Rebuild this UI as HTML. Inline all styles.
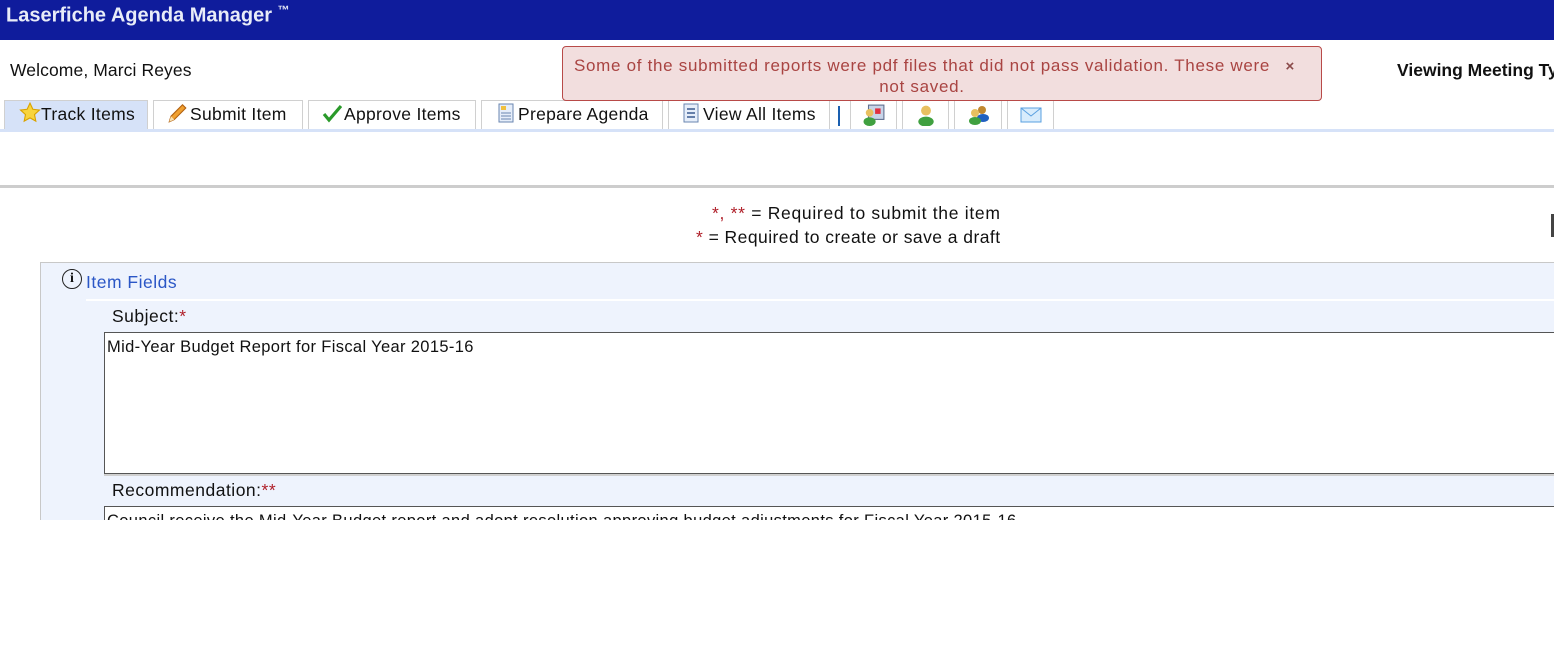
<!DOCTYPE html>
<html><head><meta charset="utf-8"><style>
*{margin:0;padding:0;box-sizing:border-box}
body{width:1554px;height:648px;background:#fff;font-family:"Liberation Sans",sans-serif;color:#111;position:relative;overflow:hidden}
.a{position:absolute;white-space:nowrap}
.hdr{left:0;top:0;width:1554px;height:40px;background:#0f1c9c;color:#e8ecf8;font-weight:bold;font-size:20px;padding:3px 0 0 6px}
.tab{position:absolute;top:100px;height:29px;border:1px solid #d0d0d0;border-bottom:none;background:#fff;font-size:17.5px;line-height:27px;padding-left:10px;letter-spacing:.3px}
.ico{display:inline-block;vertical-align:-3px;margin-right:3px}
.red{color:#b0202a}
.lbl{font-size:17.5px;letter-spacing:.5px}
</style></head><body>
<div class="a hdr">Laserfiche Agenda Manager <sup style="font-size:12px">™</sup></div>
<div class="a" style="left:10px;top:60px;font-size:17.5px;letter-spacing:.1px">Welcome, Marci Reyes</div>
<div class="a" style="left:1397px;top:60px;font-size:17.5px;font-weight:bold">Viewing Meeting Type</div>

<div class="a" style="left:0;top:129px;width:1554px;height:3px;background:#d6e2f8"></div>
<div class="tab" style="left:4px;width:144px;background:#d6e2f8;padding-left:14px"><svg class="ico" width="22" height="22" viewBox="0 0 20 20" style="margin-right:0;vertical-align:-4px"><path d="M10 1l2.6 5.6 6 .7-4.5 4.1 1.2 6L10 14.4 4.7 17.4l1.2-6L1.4 7.3l6-.7z" fill="#f8d43c" stroke="#d9a200"/></svg>Track Items</div>
<div class="tab" style="left:153px;width:150px;padding-left:12px"><svg class="ico" width="22" height="22" viewBox="0 0 20 20" style="margin-right:2px;vertical-align:-4px"><path d="M3 18l1.5-5L15 2.5l3 3L7.5 16z" fill="#f0a030" stroke="#b06010"/><path d="M3 18l1.5-5 3 3z" fill="#f8e0b0"/></svg>Submit Item</div>
<div class="tab" style="left:308px;width:168px;padding-left:13px"><svg class="ico" width="20" height="20" viewBox="0 0 20 20" style="margin-right:2px"><path d="M2 11l5 6L19 3" fill="none" stroke="#2a9a2a" stroke-width="3.2"/></svg>Approve Items</div>
<div class="tab" style="left:481px;width:182px;padding-left:15px"><svg class="ico" width="18" height="20" viewBox="0 0 16 20"><rect x="1" y="1" width="14" height="18" fill="#e6eefa" stroke="#6a86b0"/><rect x="3" y="3" width="5" height="4" fill="#f0c040"/><path d="M3 10h10M3 13h10M3 16h10" stroke="#6a86b0"/></svg>Prepare Agenda</div>
<div class="tab" style="left:668px;width:162px;padding-left:13px"><svg class="ico" width="18" height="20" viewBox="0 0 18 20"><rect x="2" y="1" width="14" height="18" fill="#e6eefa" stroke="#6a86b0"/><path d="M5 6h8M5 10h8M5 14h8" stroke="#3a5a90" stroke-width="1.5"/></svg>View All Items</div>
<div class="a" style="left:838px;top:106px;width:2px;height:20px;background:#1a5fb0"></div>
<div class="tab" style="left:850px;width:47px;padding-left:12px"><svg width="22" height="22" viewBox="0 0 20 20" style="margin-top:3px"><rect x="5" y="1" width="14" height="13" fill="#c8d4e8" stroke="#607090"/><rect x="11" y="4" width="5" height="5" fill="#e03040"/><circle cx="6" cy="8" r="3.5" fill="#e8c060"/><ellipse cx="6" cy="16" rx="5.5" ry="4" fill="#40a040"/></svg></div>
<div class="tab" style="left:902px;width:47px;padding-left:12px"><svg width="22" height="22" viewBox="0 0 20 20" style="margin-top:3px"><circle cx="10" cy="6" r="4.5" fill="#e8c060"/><ellipse cx="10" cy="16" rx="7" ry="4.5" fill="#40a040"/></svg></div>
<div class="tab" style="left:954px;width:48px;padding-left:12px"><svg width="24" height="22" viewBox="0 0 24 20" style="margin-top:3px"><circle cx="15" cy="5" r="4" fill="#c08830"/><ellipse cx="16" cy="13" rx="6" ry="4" fill="#2060c0"/><circle cx="8" cy="8" r="4" fill="#e8c060"/><ellipse cx="8" cy="16" rx="6" ry="4" fill="#40a040"/></svg></div>
<div class="tab" style="left:1007px;width:47px;padding-left:12px"><svg width="22" height="18" viewBox="0 0 22 18" style="margin-top:5px"><rect x="1" y="2" width="20" height="14" fill="#d8ecfc" stroke="#5aa0e0"/><path d="M1 2l10 8 10-8" fill="none" stroke="#5aa0e0"/></svg></div>

<div class="a" style="left:562px;top:46px;width:760px;height:55px;background:#f2dede;border:1px solid #b84a48;border-radius:4px;color:#a94442;font-size:17px;text-align:center;line-height:21px;padding-top:8px;white-space:normal;letter-spacing:.7px">
<div style="padding-right:40px">Some of the submitted reports were pdf files that did not pass validation. These were<br>not saved.</div>
<span style="position:absolute;right:26px;top:9px;font-weight:bold;font-size:15px;color:#8a4a4a">×</span></div>

<div class="a" style="left:0;top:185px;width:1554px;height:3px;background:#cdcdcd"></div>
<div class="a" style="left:1551px;top:214px;width:3px;height:23px;background:#444"></div>

<div class="a" style="left:712px;top:203px;font-size:17.5px;letter-spacing:.7px"><span class="red">*, **</span> = Required to submit the item</div>
<div class="a" style="left:696px;top:227px;font-size:17.5px;letter-spacing:.45px"><span class="red">*</span> = Required to create or save a draft</div>

<div class="a" style="left:40px;top:262px;width:1514px;height:258px;background:#eef3fd;border-left:1px solid #c8c8c8;border-top:1px solid #c8c8c8"></div>
<div class="a" style="left:62px;top:269px;width:20px;height:20px;border:1.5px solid #222;border-radius:50%;font:bold 14px 'Liberation Serif',serif;text-align:center;line-height:17px">i</div>
<div class="a lbl" style="left:86px;top:272px;color:#2a56c6">Item Fields</div>
<div class="a" style="left:86px;top:299px;width:1468px;height:2px;background:#fff"></div>
<div class="a lbl" style="left:112px;top:306px">Subject:<span class="red">*</span></div>
<div class="a" style="left:104px;top:332px;width:1450px;height:142px;background:#fff;border:1px solid #555;border-right:none;font-size:16.5px;letter-spacing:.35px;padding:5px 0 0 2px">Mid-Year Budget Report for Fiscal Year 2015-16</div>
<div class="a" style="left:104px;top:474px;width:1450px;height:2px;background:#d0d0d0"></div>
<div class="a lbl" style="left:112px;top:480px">Recommendation:<span class="red">**</span></div>
<div class="a" style="left:104px;top:506px;width:1450px;height:14px;background:#fff;border:1px solid #555;border-bottom:none;border-right:none;overflow:hidden;font-size:16.5px;letter-spacing:.35px;padding-left:2px;line-height:28px">Council receive the Mid-Year Budget report and adopt resolution approving budget adjustments for Fiscal Year 2015-16</div>
</body></html>
